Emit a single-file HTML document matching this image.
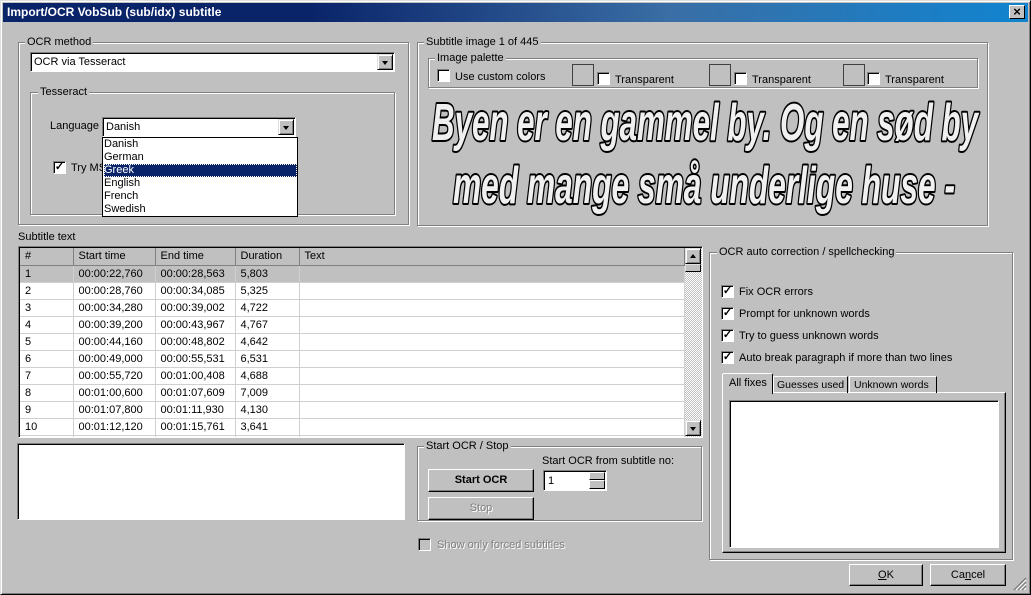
<!DOCTYPE html>
<html><head><meta charset="utf-8"><style>
*{box-sizing:border-box;margin:0;padding:0}
body{width:1031px;height:595px;background:#c0c0c0;font-family:"Liberation Sans",sans-serif;font-size:11px;color:#000;position:relative;overflow:hidden}
.a{position:absolute;white-space:nowrap}
.frame{left:0;top:0;width:1031px;height:595px;border:1px solid;border-color:#dfdfdf #000 #000 #dfdfdf;box-shadow:inset 1px 1px 0 #fff,inset -1px -1px 0 #808080}
.title{left:3px;top:3px;width:1025px;height:19px;background:linear-gradient(90deg,#0a246a,#0a246a 30%,#3a6ea5 65%,#1084d0);color:#fff;font-weight:bold;font-size:12px;line-height:19px;padding-left:4px}
.close{left:1009px;top:5px;width:16px;height:14px;background:#c0c0c0;border:1px solid;border-color:#fff #000 #000 #fff;font-size:13px;line-height:11px;text-align:center;font-weight:bold;color:#000}
.grp{border:1px solid #808080;box-shadow:1px 1px 0 #fff, inset 1px 1px 0 #fff}
.lg{background:#c0c0c0;padding:0 2px;line-height:12px}
.sunk{background:#fff;border:1px solid;border-color:#808080 #fff #fff #808080;box-shadow:inset 1px 1px 0 #000}
.btn{background:#c0c0c0;border:1px solid;border-color:#fff #000 #000 #fff;box-shadow:inset -1px -1px 0 #808080;text-align:center}
.cb{width:13px;height:13px;background:#fff;border:1px solid;border-color:#808080 #fff #fff #808080;box-shadow:inset 1px 1px 0 #000;font-size:11px;line-height:10px;text-align:center;font-weight:bold}
.arr{width:16px;height:16px;background:#c0c0c0;border:1px solid;border-color:#dfdfdf #000 #000 #dfdfdf;box-shadow:inset 1px 1px 0 #fff,inset -1px -1px 0 #808080}
.arr:after{content:"";position:absolute;left:4px;top:6px;border-left:3.5px solid transparent;border-right:3.5px solid transparent;border-top:4px solid #000}
.arr.up:after{border-top:0;border-bottom:4px solid #000;top:5px}
table{border-collapse:collapse;table-layout:fixed}
td{height:17px;border-right:1px solid #d0d0d0;border-bottom:1px solid #d0d0d0;padding-left:5px;white-space:nowrap;overflow:hidden}
</style></head><body>
<div class="a frame"></div>
<div class="a title">Import/OCR VobSub (sub/idx) subtitle</div>
<div class="a close">×</div>

<!-- OCR method -->
<div class="a grp" style="left:18px;top:42px;width:391px;height:183px"></div>
<div class="a lg" style="left:25px;top:36px">OCR method</div>
<div class="a sunk" style="left:30px;top:52px;width:365px;height:20px;padding:3px 3px">OCR via Tesseract</div>
<div class="a arr" style="left:377px;top:54px"></div>
<div class="a grp" style="left:30px;top:92px;width:365px;height:123px"></div>
<div class="a lg" style="left:38px;top:86px">Tesseract</div>
<div class="a" style="left:50px;top:120px">Language</div>
<div class="a sunk" style="left:102px;top:117px;width:194px;height:20px;padding:3px 3px">Danish</div>
<div class="a arr" style="left:278px;top:119px"></div>
<div class="a cb" style="left:53px;top:161px">✓</div>
<div class="a" style="left:71px;top:162px">Try MS</div>
<div class="a" style="left:102px;top:137px;width:196px;height:80px;background:#fff;border:1px solid #000;line-height:13px;padding-left:1px">
<div>Danish</div><div>German</div><div style="background:#0a246a;color:#fff;outline:1px dotted #fff;outline-offset:-1px">Greek</div><div>English</div><div>French</div><div>Swedish</div></div>

<!-- Subtitle image -->
<div class="a grp" style="left:417px;top:42px;width:571px;height:184px"></div>
<div class="a lg" style="left:424px;top:36px">Subtitle image 1 of 445</div>
<div class="a grp" style="left:428px;top:58px;width:550px;height:30px"></div>
<div class="a lg" style="left:435px;top:52px">Image palette</div>
<div class="a cb" style="left:437px;top:69px"></div>
<div class="a" style="left:455px;top:71px">Use custom colors</div>
<div class="a" style="left:572px;top:64px;width:22px;height:22px;border:1px solid #404040"></div>
<div class="a cb" style="left:597px;top:72px"></div>
<div class="a" style="left:615px;top:74px">Transparent</div>
<div class="a" style="left:709px;top:64px;width:22px;height:22px;border:1px solid #404040"></div>
<div class="a cb" style="left:734px;top:72px"></div>
<div class="a" style="left:752px;top:74px">Transparent</div>
<div class="a" style="left:843px;top:64px;width:22px;height:22px;border:1px solid #404040"></div>
<div class="a cb" style="left:867px;top:72px"></div>
<div class="a" style="left:885px;top:74px">Transparent</div>
<svg class="a" style="left:420px;top:90px" width="566" height="134">
<g font-family="Liberation Sans, sans-serif" font-weight="bold" font-style="italic" font-size="52" fill="#f0f0f0" stroke="#000" stroke-width="4" paint-order="stroke" stroke-linejoin="round">
<text x="12" y="50" textLength="546" lengthAdjust="spacingAndGlyphs">Byen er en gammel by. Og en sød by</text>
<text x="33" y="113" textLength="502" lengthAdjust="spacingAndGlyphs">med mange små underlige huse -</text>
</g></svg>

<!-- Subtitle text list -->
<div class="a" style="left:18px;top:231px">Subtitle text</div>
<div class="a" style="left:18px;top:246px;width:685px;height:192px;border:1px solid;border-color:#808080 #fff #fff #808080;box-shadow:inset 1px 1px 0 #000;background:#fff;overflow:hidden">
<table class="a" style="left:1px;top:1px;width:665px">
<colgroup><col style="width:53px"><col style="width:82px"><col style="width:80px"><col style="width:64px"><col></colgroup>
<tr style="background:#c0c0c0"><td style="border-color:#808080;height:16px">#</td><td style="border-color:#808080">Start time</td><td style="border-color:#808080">End time</td><td style="border-color:#808080">Duration</td><td style="border-color:#808080">Text</td></tr>
<tr style="background:#c0c0c0"><td>1</td><td>00:00:22,760</td><td>00:00:28,563</td><td>5,803</td><td></td></tr>
<tr><td>2</td><td>00:00:28,760</td><td>00:00:34,085</td><td>5,325</td><td></td></tr>
<tr><td>3</td><td>00:00:34,280</td><td>00:00:39,002</td><td>4,722</td><td></td></tr>
<tr><td>4</td><td>00:00:39,200</td><td>00:00:43,967</td><td>4,767</td><td></td></tr>
<tr><td>5</td><td>00:00:44,160</td><td>00:00:48,802</td><td>4,642</td><td></td></tr>
<tr><td>6</td><td>00:00:49,000</td><td>00:00:55,531</td><td>6,531</td><td></td></tr>
<tr><td>7</td><td>00:00:55,720</td><td>00:01:00,408</td><td>4,688</td><td></td></tr>
<tr><td>8</td><td>00:01:00,600</td><td>00:01:07,609</td><td>7,009</td><td></td></tr>
<tr><td>9</td><td>00:01:07,800</td><td>00:01:11,930</td><td>4,130</td><td></td></tr>
<tr><td>10</td><td>00:01:12,120</td><td>00:01:15,761</td><td>3,641</td><td></td></tr>
<tr><td></td><td></td><td></td><td></td><td></td></tr>
</table>
<div class="a" style="left:666px;top:1px;width:17px;height:189px;background:repeating-conic-gradient(#fff 0 25%,#c0c0c0 0 50%) 0 0/2px 2px"></div>
<div class="a arr up" style="left:666px;top:1px"></div>
<div class="a" style="left:666px;top:17px;width:16px;height:8px;background:#c0c0c0;border:1px solid;border-color:#dfdfdf #000 #000 #dfdfdf"></div>
<div class="a arr" style="left:666px;top:173px"></div>
</div>

<div class="a sunk" style="left:17px;top:443px;width:388px;height:77px"></div>

<!-- Start OCR -->
<div class="a grp" style="left:417px;top:446px;width:285px;height:75px"></div>
<div class="a lg" style="left:424px;top:440px">Start OCR / Stop</div>
<div class="a" style="left:542px;top:455px">Start OCR from subtitle no:</div>
<div class="a btn" style="left:428px;top:469px;width:106px;height:23px;font-weight:bold;line-height:20px">Start OCR</div>
<div class="a btn" style="left:428px;top:497px;width:106px;height:23px;line-height:20px;color:#808080;text-shadow:1px 1px 0 #fff">Stop</div>
<div class="a sunk" style="left:543px;top:470px;width:64px;height:21px;padding:4px 4px">1</div>
<div class="a" style="left:589px;top:472px;width:16px;height:8px;border:1px solid;border-color:#fff #000 #000 #fff;background:#c0c0c0"></div>
<div class="a" style="left:589px;top:480px;width:16px;height:9px;border:1px solid;border-color:#fff #000 #000 #fff;background:#c0c0c0"></div>
<div class="a cb" style="left:418px;top:538px;background:#c0c0c0"></div>
<div class="a" style="left:437px;top:539px;color:#808080;text-shadow:1px 1px 0 #fff">Show only forced subtitles</div>

<!-- OCR auto correction -->
<div class="a grp" style="left:709px;top:252px;width:304px;height:308px"></div>
<div class="a lg" style="left:717px;top:246px">OCR auto correction / spellchecking</div>
<div class="a cb" style="left:721px;top:285px">✓</div><div class="a" style="left:739px;top:286px">Fix OCR errors</div>
<div class="a cb" style="left:721px;top:307px">✓</div><div class="a" style="left:739px;top:308px">Prompt for unknown words</div>
<div class="a cb" style="left:721px;top:329px">✓</div><div class="a" style="left:739px;top:330px">Try to guess unknown words</div>
<div class="a cb" style="left:721px;top:351px">✓</div><div class="a" style="left:739px;top:352px">Auto break paragraph if more than two lines</div>
<div class="a" style="left:722px;top:392px;width:284px;height:161px;border:1px solid;border-color:#fff #000 #000 #fff;box-shadow:inset -1px -1px 0 #808080"></div>
<div class="a" style="left:722px;top:373px;width:51px;height:21px;border:1px solid;border-color:#fff #000 transparent #fff;border-bottom:0;background:#c0c0c0;padding:3px 0 0 6px;border-radius:2px 2px 0 0">All fixes</div>
<div class="a" style="left:773px;top:376px;width:75px;height:17px;border:1px solid;border-color:#fff #000 transparent #fff;border-bottom:0;padding:2px 0 0 3px;font-size:10.5px">Guesses used</div>
<div class="a" style="left:849px;top:376px;width:88px;height:17px;border:1px solid;border-color:#fff #000 transparent #fff;border-bottom:0;padding:2px 0 0 4px;font-size:10.5px">Unknown words</div>
<div class="a sunk" style="left:729px;top:400px;width:270px;height:148px"></div>

<div class="a btn" style="left:849px;top:564px;width:74px;height:22px;line-height:20px"><u>O</u>K</div>
<div class="a btn" style="left:930px;top:564px;width:76px;height:22px;line-height:20px">Ca<u>n</u>cel</div>
<svg class="a" style="left:1013px;top:577px" width="14" height="14"><path d="M13 1L1 13M13 5L5 13M13 9L9 13" stroke="#808080" stroke-width="1.5"/><path d="M13 3L3 13M13 7L7 13M13 11L11 13" stroke="#fff" stroke-width="1"/></svg>
</body></html>
